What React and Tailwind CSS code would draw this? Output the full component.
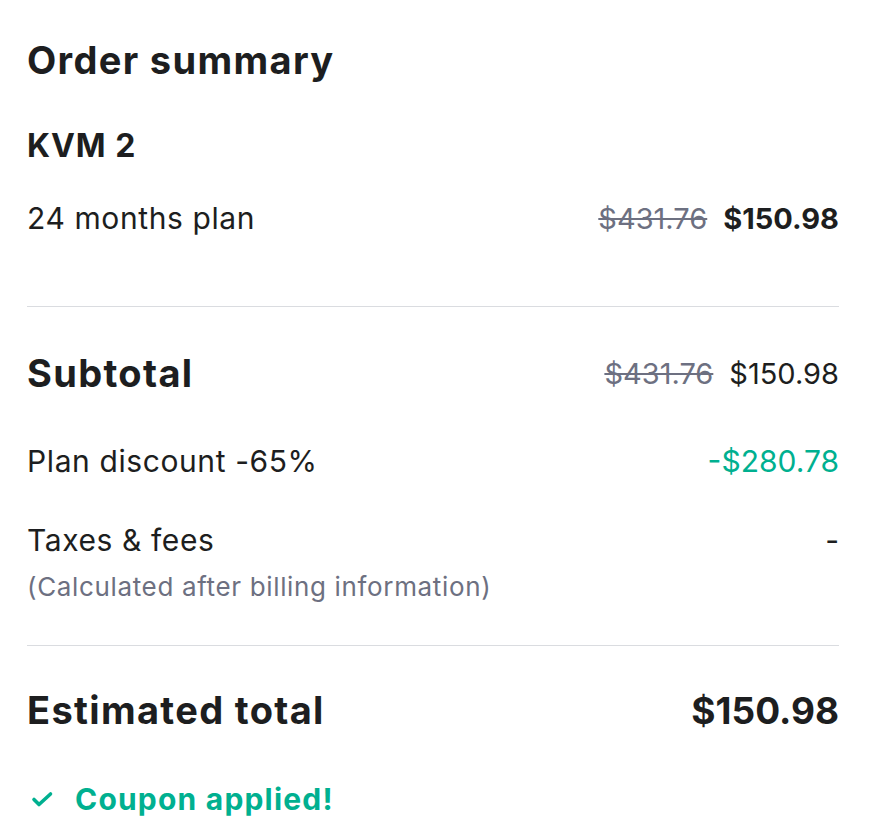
export default function App(){
  const font = { fontFamily: 'Inter, "Noto Sans", sans-serif' };
  return (
    <div className="min-h-screen bg-white text-[#1d1e20]" style={font}>
      <div className="ml-[27px] w-[812px] flex flex-col">
        <div className="mt-[30px] h-[60px] flex items-center">
          <h1 className="text-[38px] font-bold tracking-[0.035em] leading-none">Order summary</h1>
        </div>

        <div className="mt-[30px] h-[52px] flex items-center">
          <h2 className="text-[32px] font-bold tracking-[0.03em] leading-none">KVM 2</h2>
        </div>

        <div className="mt-[20px] h-[52px] flex items-center justify-between text-[30px] leading-none">
          <span className="tracking-[0.02em]">24 months plan</span>
          <span className="flex items-center gap-[16px] text-[29px]">
            <s className="text-[#6d7081]">$431.76</s>
            <b className="font-bold">$150.98</b>
          </span>
        </div>

        <div className="mt-[62px] h-px bg-[#dadce0]"></div>

        <div className="mt-[40px] h-[52px] flex items-center justify-between leading-none">
          <span className="text-[38px] font-bold tracking-[0.035em]">Subtotal</span>
          <span className="flex items-center gap-[16px] text-[29px]">
            <s className="text-[#6d7081]">$431.76</s>
            <span>$150.98</span>
          </span>
        </div>

        <div className="mt-[36px] h-[52px] flex items-center justify-between text-[30px] leading-none">
          <span className="tracking-[0.02em]">Plan discount -65%</span>
          <span className="text-[#00b090]">-$280.78</span>
        </div>

        <div className="mt-[33px] h-[40px] flex items-center justify-between text-[30px] leading-none">
          <span className="tracking-[0.02em]">Taxes &amp; fees</span>
          <span>-</span>
        </div>
        <div className="mt-[10px] h-[34px] flex items-center text-[26px] tracking-[0.025em] leading-none text-[#6d7081]">
          (Calculated after billing information)
        </div>

        <div className="mt-[41px] h-px bg-[#dadce0]"></div>

        <div className="mt-[38px] h-[52px] flex items-center justify-between font-bold leading-none">
          <span className="text-[38px] tracking-[0.035em]">Estimated total</span>
          <span className="text-[37px]">$150.98</span>
        </div>

        <div className="mt-[43px] h-[40px] flex items-center gap-[21px] text-[#00b090]">
          <svg className="w-[24px] h-[24px] ml-[3px]" viewBox="0 0 24 24" fill="none" stroke="currentColor" strokeWidth="3.6" strokeLinecap="round" strokeLinejoin="round">
            <path d="M4 12.5l5 5L20.5 7" />
          </svg>
          <span className="text-[30px] font-bold tracking-[0.04em] leading-none">Coupon applied!</span>
        </div>
      </div>
    </div>
  )
}
